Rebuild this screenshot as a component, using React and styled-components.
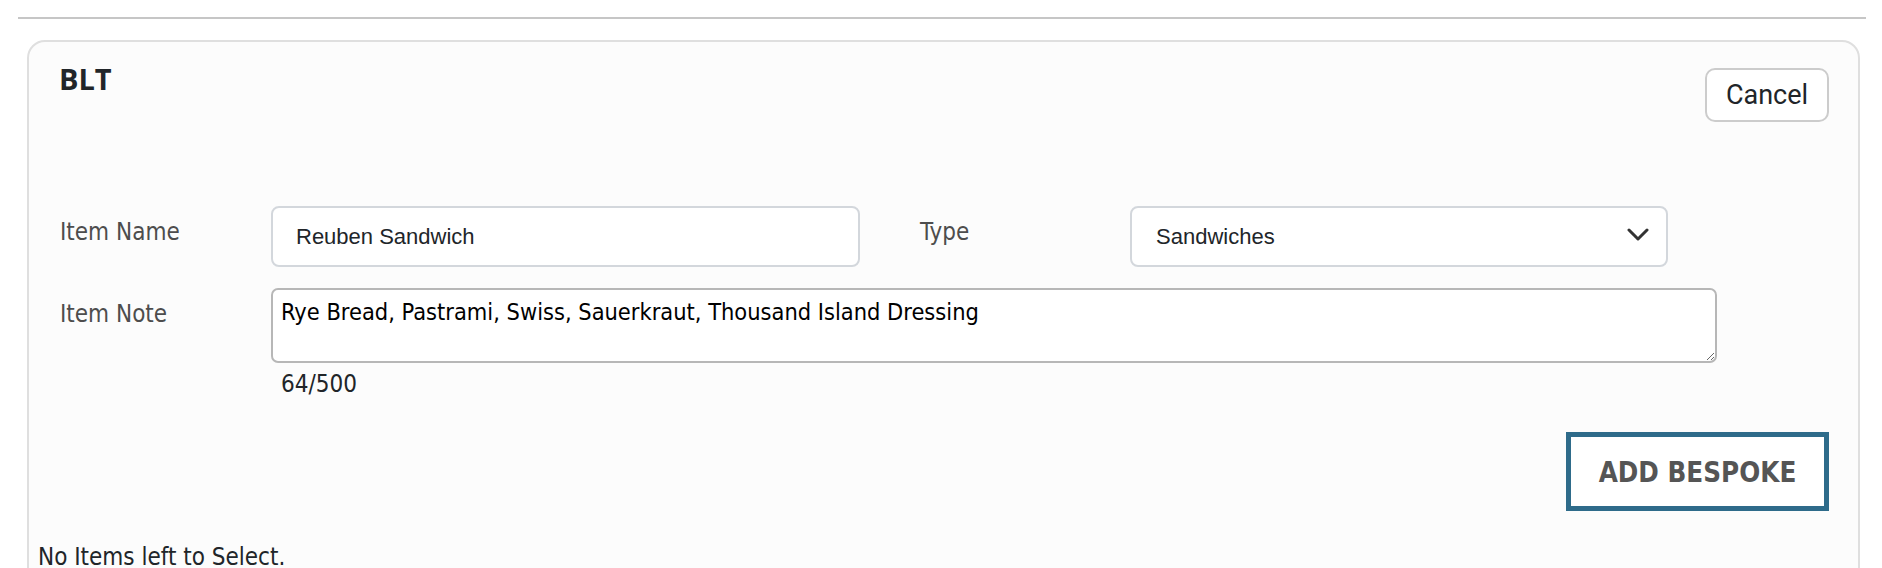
import React from "react";
import styled, { createGlobalStyle } from "styled-components";

const GlobalStyle = createGlobalStyle`
    body {
        margin: 0;
        background-color: #ffffff;
        font-family: "DejaVu Sans Condensed", "DejaVu Sans", sans-serif;
        color: #212529;
    }
`;

const Page = styled.div`
    padding: 17px 16px 0 18px;
`;

const Divider = styled.hr`
    margin: 0;
    border: none;
    border-top: 2px solid #c6c6c6;
`;

const Card = styled.div`
    margin: 21px 6px 0 9px;
    background-color: #fcfcfc;
    border: 2px solid #dfdfdf;
    border-radius: 18px;
    padding-bottom: 30px;
`;

const Inner = styled.div`
    padding: 19px 29px 0 30px;
`;

const Header = styled.div`
    display: flex;
    justify-content: space-between;
    align-items: flex-start;
`;

const Title = styled.h5`
    margin: 0;
    font-family: "Open Sans", sans-serif;
    font-weight: 700;
    font-size: 29px;
    line-height: 36px;
    color: #212529;
`;

const CancelButton = styled.button`
    margin-top: 7px;
    width: 124px;
    height: 54px;
    background-color: #ffffff;
    border: 2px solid #cccccc;
    border-radius: 10px;
    font-family: Roboto, sans-serif;
    font-size: 27px;
    color: #212529;
    cursor: pointer;
`;

const Form = styled.div`
    margin-top: 84px;
    margin-left: 1px;
`;

const FieldRow = styled.div`
    display: flex;
    align-items: flex-start;
    margin-top: ${(p) => p.$top || 0}px;
`;

const Label = styled.label`
    flex: none;
    width: ${(p) => p.$width || 211}px;
    margin-left: ${(p) => p.$gap || 0}px;
    padding-top: 8px;
    font-size: 24px;
    line-height: 36px;
    color: #4d4d4d;
`;

const TextInput = styled.input`
    box-sizing: border-box;
    width: 589px;
    height: 61px;
    padding: 0 23px;
    background-color: #ffffff;
    border: 2px solid #d3d7dc;
    border-radius: 8px;
    font-family: "Liberation Sans", Arial, sans-serif;
    font-size: 22px;
    color: #212529;
    outline: none;
`;

const SelectWrap = styled.div`
    position: relative;
    width: 538px;
`;

const Select = styled.select`
    box-sizing: border-box;
    width: 100%;
    height: 61px;
    padding: 0 60px 0 24px;
    appearance: none;
    background-color: #ffffff;
    border: 2px solid #d3d7dc;
    border-radius: 8px;
    font-family: "Liberation Sans", Arial, sans-serif;
    font-size: 22px;
    color: #212529;
    outline: none;
`;

const Chevron = styled.svg`
    position: absolute;
    right: 19px;
    top: 22px;
    pointer-events: none;
`;

const NoteArea = styled.textarea`
    box-sizing: border-box;
    width: 1446px;
    height: 75px;
    padding: 8px 8px;
    background-color: #ffffff;
    border: 2px solid #b7b7b7;
    border-radius: 7px;
    font-family: "DejaVu Sans Condensed", "DejaVu Sans", sans-serif;
    font-size: 23.4px;
    color: #000000;
    outline: none;
`;

const Counter = styled.div`
    margin: 3px 0 0 221px;
    font-size: 24px;
    line-height: 36px;
    color: #212529;
`;

const Actions = styled.div`
    display: flex;
    justify-content: flex-end;
    margin-top: 30px;
`;

const BespokeButton = styled.button`
    box-sizing: border-box;
    width: 263px;
    height: 79px;
    background-color: #ffffff;
    border: 5px solid #2e6b8a;
    border-radius: 0;
    font-family: "DejaVu Sans Condensed", "DejaVu Sans", sans-serif;
    font-weight: 700;
    font-size: 27.5px;
    color: #555555;
    cursor: pointer;
`;

const EmptyNote = styled.p`
    margin: 28px 0 0 9px;
    font-size: 24px;
    line-height: 36px;
    color: #212529;
`;

const App = () => {
    return (
        <>
            <GlobalStyle />
            <Page>
                <Divider />
                <Card>
                    <Inner>
                        <Header>
                            <Title>BLT</Title>
                            <CancelButton>Cancel</CancelButton>
                        </Header>
                        <Form>
                            <FieldRow>
                                <Label>Item Name</Label>
                                <TextInput defaultValue="Reuben Sandwich" />
                                <Label $gap={60} $width={210}>Type</Label>
                                <SelectWrap>
                                    <Select defaultValue="Sandwiches">
                                        <option>Sandwiches</option>
                                        <option>Salads</option>
                                        <option>Soups</option>
                                    </Select>
                                    <Chevron width="22" height="14" viewBox="0 0 22 14">
                                        <path d="M2 2 L11 11 L20 2" fill="none" stroke="#333" strokeWidth="3" strokeLinecap="round" strokeLinejoin="round" />
                                    </Chevron>
                                </SelectWrap>
                            </FieldRow>
                            <FieldRow $top={21}>
                                <Label>Item Note</Label>
                                <NoteArea defaultValue="Rye Bread, Pastrami, Swiss, Sauerkraut, Thousand Island Dressing" />
                            </FieldRow>
                            <Counter>64/500</Counter>
                            <Actions>
                                <BespokeButton>ADD BESPOKE</BespokeButton>
                            </Actions>
                        </Form>
                    </Inner>
                    <EmptyNote>No Items left to Select.</EmptyNote>
                </Card>
            </Page>
        </>
    );
};

export default App;
